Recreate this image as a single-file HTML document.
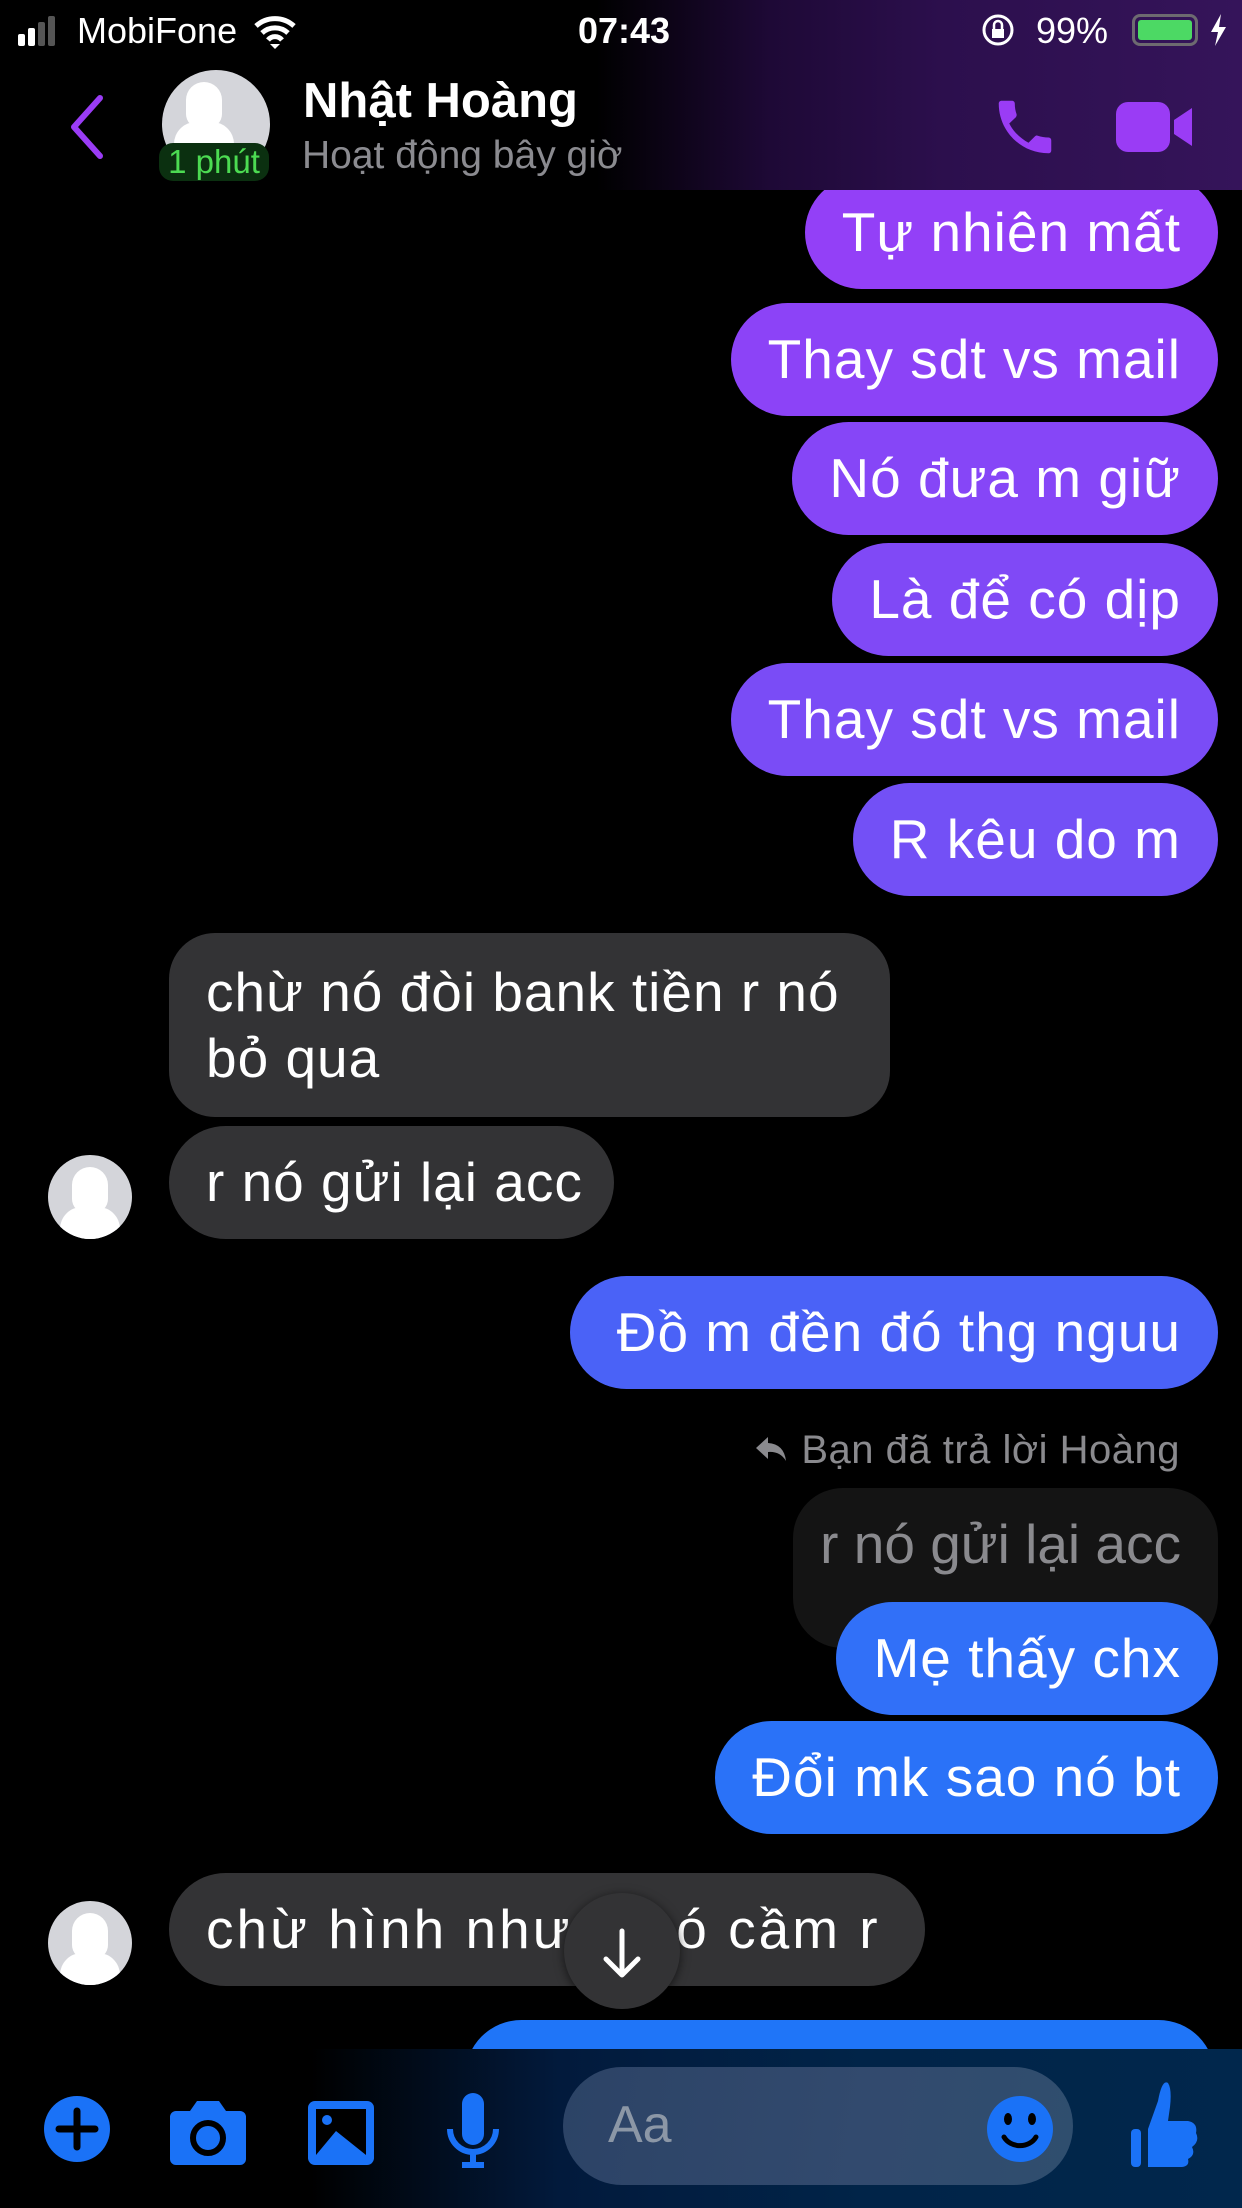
<!DOCTYPE html>
<html><head><meta charset="utf-8"><style>
*{margin:0;padding:0;box-sizing:border-box}
body{width:1242px;height:2208px;background:#000;position:relative;overflow:hidden;font-family:"Liberation Sans",sans-serif;color:#fff}
.b{position:absolute;height:113px;border-radius:57px;font-size:55px;letter-spacing:1px;line-height:113px;padding:0 37px;white-space:nowrap}
.r{right:24px;text-align:right}
.l{left:169px;background:#333335}
.av{position:absolute;width:84px;height:84px;border-radius:50%;background:#d4d5da;overflow:hidden}
.av:after{content:"";position:absolute;left:24px;top:12px;width:36px;height:46px;border-radius:18px 18px 14px 14px;background:#fff}
.av:before{content:"";position:absolute;left:12px;top:52px;width:60px;height:50px;border-radius:22px 22px 0 0;background:#fff}
</style></head><body>

<div class="b r" style="top:176px;background:#9340f7">Tự nhiên mất</div>
<div class="b r" style="top:303px;background:#8c43f7">Thay sdt vs mail</div>
<div class="b r" style="top:422px;background:#8646f7">Nó đưa m giữ</div>
<div class="b r" style="top:543px;background:#8049f6">Là để có dịp</div>
<div class="b r" style="top:663px;background:#7a4cf6">Thay sdt vs mail</div>
<div class="b r" style="top:783px;background:#7350f6">R kêu do m</div>

<div class="b l" style="top:933px;width:721px;height:184px;line-height:66px;padding-top:26px;border-radius:46px">chừ nó đòi bank tiền r nó<br>bỏ qua</div>
<div class="b l" style="top:1126px;width:445px">r nó gửi lại acc</div>
<div class="av" style="left:48px;top:1155px"></div>

<div class="b r" style="top:1276px;width:648px;background:#4a62f7">Đồ m đền đó thg nguu</div>

<div style="position:absolute;right:62px;top:1426px;font-size:40px;letter-spacing:0.5px;color:#8a8a8e;line-height:48px"><svg width="36" height="30" viewBox="0 0 36 30" style="vertical-align:-2px"><path d="M14 2L2 13L14 24V17Q26 16 32 26Q30 9 14 8Z" fill="#8a8a8e"/></svg> Bạn đã trả lời Hoàng</div>
<div class="b r" style="top:1488px;width:425px;height:160px;background:#141414;color:#8a8a8e;line-height:113px;border-radius:50px;letter-spacing:0;padding:0 37px 0 0">r nó gửi lại acc</div>
<div class="b r" style="top:1602px;background:#3170f8">Mẹ thấy chx</div>
<div class="b r" style="top:1721px;background:#2a72f8">Đổi mk sao nó bt</div>

<div class="b l" style="top:1873px;width:756px;letter-spacing:3px">chừ hình như a nó cầm r</div>
<div class="av" style="left:48px;top:1901px"></div>
<div style="position:absolute;left:564px;top:1893px;width:116px;height:116px;border-radius:50%;background:#333335;box-shadow:0 2px 10px rgba(0,0,0,.6)">
<svg width="116" height="116" viewBox="0 0 116 116"><path d="M58 38V82M42 66L58 82L74 66" stroke="#fff" stroke-width="5" fill="none" stroke-linecap="round" stroke-linejoin="round"/></svg></div>
<div style="position:absolute;left:465px;top:2020px;width:750px;height:113px;border-radius:57px;background:#1f75f8"></div>

<!-- bottom bar -->
<div style="position:absolute;left:0;top:2049px;width:1242px;height:159px;background:linear-gradient(90deg,#000 0%,#000 25%,#021a3c 45%,#012448 70%,#01274c 100%)"></div>
<div style="position:absolute;left:563px;top:2067px;width:510px;height:118px;border-radius:59px;background:linear-gradient(100deg,#2c4366,#324a6e 60%,#2f4e6e)"></div>
<div style="position:absolute;left:608px;top:2095px;font-size:52px;color:#8c97a6;line-height:60px">Aa</div>
<svg style="position:absolute;left:0;top:2049px" width="1242" height="159" viewBox="0 0 1242 159">
<circle cx="77" cy="80" r="33" fill="#1a72f7"/><path d="M77 62V98M59 80H95" stroke="#000" stroke-width="7" stroke-linecap="round"/>
<path d="M176 62h14l7-10h22l7 10h14a6 6 0 0 1 6 6v42a6 6 0 0 1-6 6H176a6 6 0 0 1-6-6V68a6 6 0 0 1 6-6z" fill="#1a72f7"/><circle cx="208" cy="89" r="15" fill="none" stroke="#000" stroke-width="6"/>
<rect x="308" y="52" width="66" height="64" rx="7" fill="#1a72f7"/><rect x="316" y="60" width="50" height="46" fill="#000"/><circle cx="327" cy="71" r="5" fill="#1a72f7"/><path d="M316 106L336 82L366 106Z" fill="#1a72f7"/>
<rect x="462" y="44" width="22" height="52" rx="11" fill="#1a72f7"/><path d="M450 80a23 23 0 0 0 46 0" stroke="#1a72f7" stroke-width="6" fill="none"/><path d="M473 103V116M462 116H484" stroke="#1a72f7" stroke-width="6"/>
<circle cx="1020" cy="80" r="33" fill="#1a72f7"/><ellipse cx="1008" cy="70" rx="4" ry="6" fill="#000"/><ellipse cx="1032" cy="70" rx="4" ry="6" fill="#000"/><path d="M1004 88a18 16 0 0 0 32 0" stroke="#000" stroke-width="5" fill="none" stroke-linecap="round"/>
<rect x="1131" y="80" width="10" height="38" rx="4" fill="#1a72f7"/><path d="M1148 80L1158 52Q1162 30 1168 34Q1172 40 1170 58L1168 72H1188Q1198 74 1196 84Q1200 92 1192 98Q1196 106 1188 110Q1190 118 1180 118H1148Z" fill="#1a72f7"/>
</svg>

<!-- header -->
<div style="position:absolute;left:0;top:0;width:1242px;height:190px;background:linear-gradient(90deg,#000 0%,#000 48%,#1e0936 62%,#2c0f4d 76%,#35145a 100%)"></div>
<div style="position:absolute;left:77px;top:8px;font-size:36px;line-height:46px">MobiFone</div>
<svg style="position:absolute;left:16px;top:12px" width="320" height="40"><rect x="2" y="22" width="7" height="12" rx="2" fill="#fff"/><rect x="12" y="16" width="7" height="18" rx="2" fill="#fff"/><rect x="22" y="10" width="7" height="24" rx="2" fill="#555"/><rect x="32" y="4" width="7" height="30" rx="2" fill="#555"/>
<g transform="translate(-24,0)"><path d="M264 14a28 28 0 0 1 38 0M270 21a19 19 0 0 1 26 0M276 28a9 9 0 0 1 14 0" stroke="#fff" stroke-width="5" fill="none"/><path d="M278 32l5 5 5-5z" fill="#fff"/></g></svg>
<div style="position:absolute;left:578px;top:8px;font-size:36px;font-weight:bold;line-height:46px">07:43</div>
<svg style="position:absolute;left:980px;top:12px" width="40" height="36"><circle cx="18" cy="18" r="14" stroke="#fff" stroke-width="3" fill="none"/><rect x="12" y="17" width="12" height="9" fill="#fff"/><path d="M14 17v-4a4 4 0 0 1 8 0v4" stroke="#fff" stroke-width="2.5" fill="none"/></svg>
<div style="position:absolute;left:1036px;top:8px;font-size:36px;line-height:46px">99%</div>
<div style="position:absolute;left:1132px;top:14px;width:66px;height:32px;border:3px solid #6d6a70;border-radius:8px;padding:3px"><div style="width:100%;height:100%;background:#4cd964;border-radius:3px"></div></div>
<svg style="position:absolute;left:1208px;top:12px" width="22" height="36"><path d="M13 2L3 20h7l-3 14 11-19h-7z" fill="#fff"/></svg>

<svg style="position:absolute;left:60px;top:92px" width="50" height="70"><path d="M40 6L14 35L40 64" stroke="#9a3cf5" stroke-width="6" fill="none" stroke-linecap="round" stroke-linejoin="round"/></svg>
<div class="av" style="left:162px;top:70px;width:108px;height:108px"></div>
<div style="position:absolute;left:159px;top:143px;width:110px;height:38px;border-radius:14px;background:#0b3010;color:#4cdb52;font-size:33px;line-height:38px;text-align:center">1 phút</div>
<div style="position:absolute;left:303px;top:72px;font-size:49px;font-weight:bold;line-height:58px">Nhật Hoàng</div>
<div style="position:absolute;left:302px;top:134px;font-size:39px;color:#8b8b90;line-height:44px">Hoạt động bây giờ</div>
<svg style="position:absolute;left:990px;top:92px" width="70" height="70" viewBox="0 0 24 24"><path d="M6.6 10.8c1.4 2.8 3.8 5.1 6.6 6.6l2.2-2.2c.3-.3.7-.4 1-.2 1.1.4 2.3.6 3.6.6.6 0 1 .4 1 1V20c0 .6-.4 1-1 1C10.6 21 3 13.4 3 4c0-.6.4-1 1-1h3.5c.6 0 1 .4 1 1 0 1.3.2 2.5.6 3.6.1.3 0 .7-.2 1z" fill="#9a3cf5"/></svg>
<svg style="position:absolute;left:1114px;top:100px" width="82" height="54"><rect x="2" y="2" width="54" height="50" rx="12" fill="#9a3cf5"/><path d="M60 20L78 8V46L60 34Z" fill="#9a3cf5"/></svg>
</body></html>
